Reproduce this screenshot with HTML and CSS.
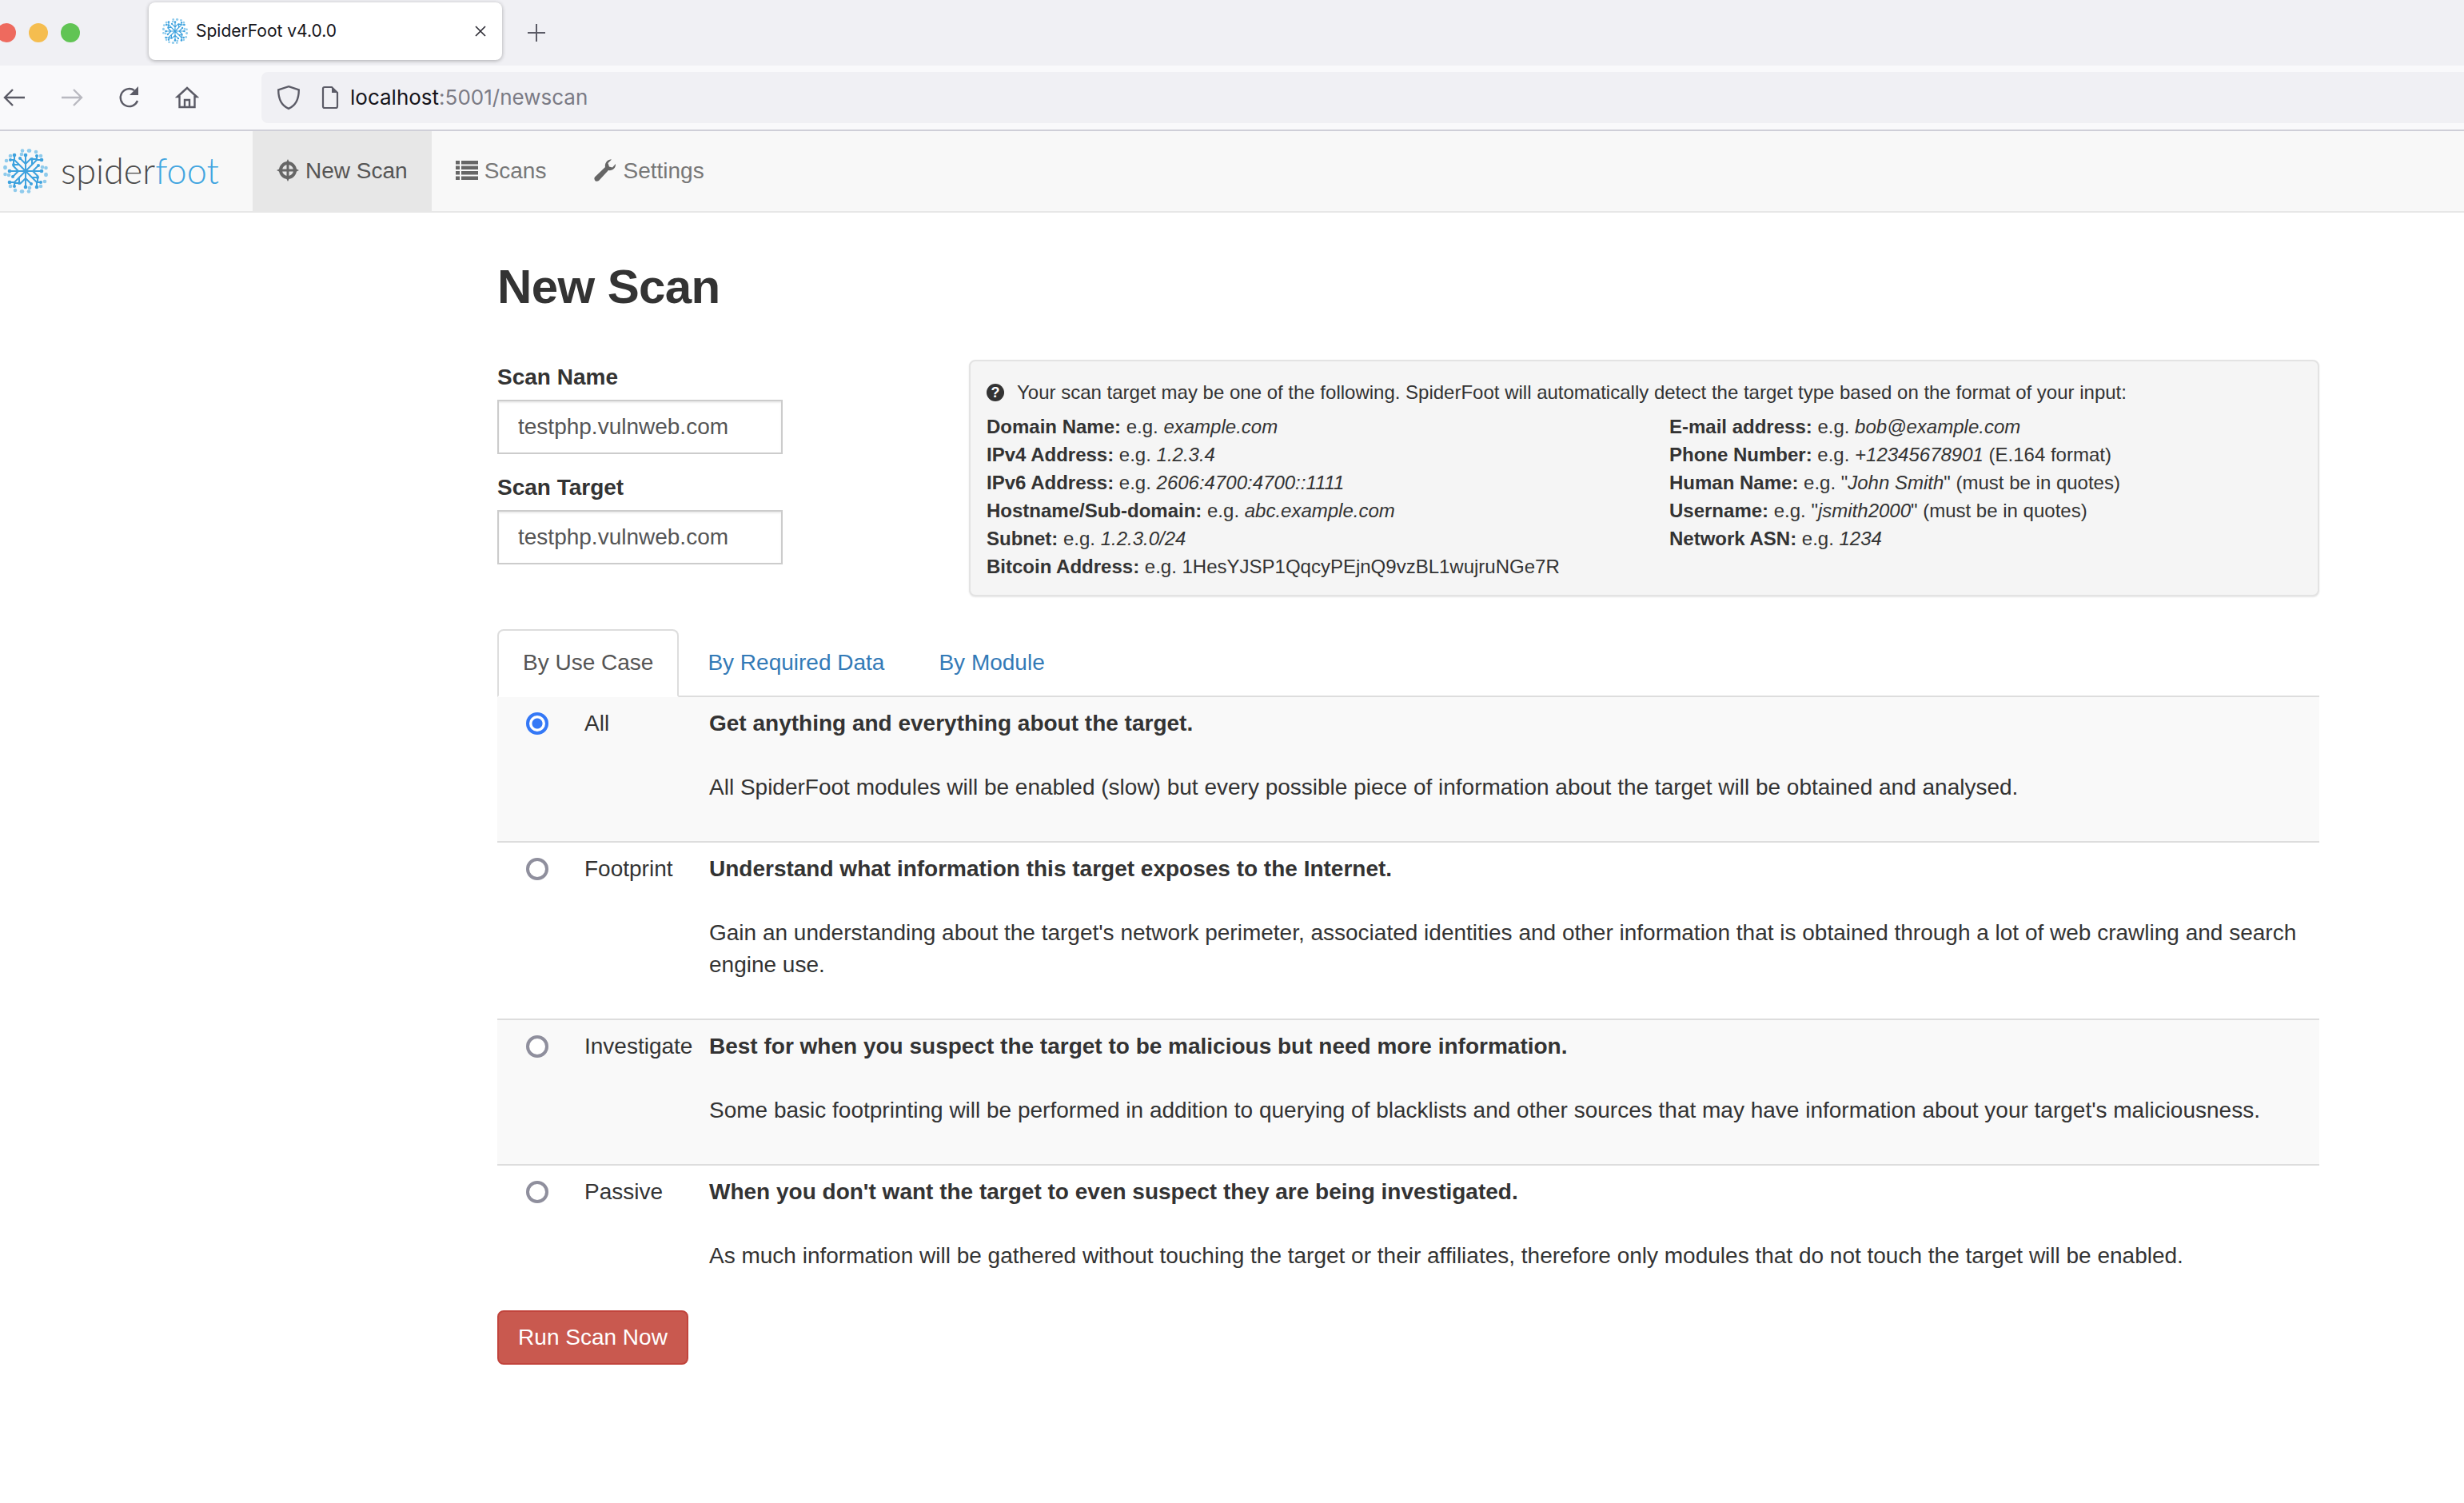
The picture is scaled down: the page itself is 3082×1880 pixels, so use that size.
FILE: index.html
```html
<!DOCTYPE html>
<html>
    <head>
        <meta charset="utf-8">
        <title>SpiderFoot v4.0.0</title>
        <link rel="stylesheet" href="styles.css">
    </head>
    <body>
        <svg class="defs" width="0" height="0">
            <defs>
                <g id="quarter">
                    <circle class="pale" cx="32" cy="2.5" r="2.3"/>
                    <circle class="pale" cx="24" cy="2.5" r="2.3"/>
                    <circle class="pale" cx="9" cy="9" r="2.3"/>
                    <circle class="pale" cx="4" cy="15" r="2.3"/>
                    <circle class="pale" cx="2.5" cy="23" r="2.3"/>
                    <circle class="pale" cx="7" cy="33" r="2.3"/>
                    <path class="arm" d="M28 28V8M28 28L14 14V8M28 19L21 12M14 14H9M28 28L20 20H13V15M28 19L35 12"/>
                    <circle class="dot" cx="28" cy="8" r="2.3"/>
                    <circle class="dot" cx="14" cy="8" r="2.3"/>
                    <circle class="dot" cx="21" cy="12" r="2"/>
                    <circle class="dot" cx="9" cy="14" r="2"/>
                    <circle class="dot" cx="13" cy="20" r="2"/>
                </g>
                <g id="logo-mark">
                    <use href="#quarter"/>
                    <use href="#quarter" transform="rotate(90 28 28)"/>
                    <use href="#quarter" transform="rotate(180 28 28)"/>
                    <use href="#quarter" transform="rotate(270 28 28)"/>
                </g>
            </defs>
        </svg>

        <div class="tabstrip">
            <span class="light red"></span>
            <span class="light yellow"></span>
            <span class="light green"></span>
            <div class="browsertab">
                <svg class="favicon" viewBox="0 0 56 56"><use href="#logo-mark"/></svg>
                <span class="browsertab-title">SpiderFoot v4.0.0</span>
                <svg class="closex" viewBox="0 0 16 16"><path d="M2 2L14 14M14 2L2 14"/></svg>
            </div>
            <svg class="newtab" viewBox="0 0 24 24"><path d="M12 1V23M1 12H23"/></svg>
        </div>

        <div class="toolbar">
            <svg class="tool back" viewBox="0 0 30 30"><path d="M28 15H3M13 5L3 15L13 25"/></svg>
            <svg class="tool forward" viewBox="0 0 30 30"><path d="M2 15H27M17 5L27 15L17 25"/></svg>
            <svg class="tool reload" viewBox="0 0 30 30"><path d="M25 19A11 11 0 1 1 21 6"/><path class="solid" d="M26 1V12H15Z"/></svg>
            <svg class="tool home" viewBox="0 0 30 30"><path d="M15 3L3 14L5.500 14V27H24.500V14L27 14ZM12 27V18H18V27"/></svg>
            <div class="urlbar">
                <svg class="shield" viewBox="0 0 30 30"><path d="M15 2L27 6C27 16 24 24 15 28C6 24 3 16 3 6Z"/></svg>
                <svg class="page" viewBox="0 0 24 30"><path d="M3 4A2 2 0 0 1 5 2H14L21 9V26A2 2 0 0 1 19 28H5A2 2 0 0 1 3 26Z"/><path class="solid" d="M14 2L21 9H14Z"/></svg>
                <span class="url">localhost<span class="url-rest">:5001/newscan</span></span>
            </div>
        </div>

        <nav class="navbar">
            <div class="brand">
                <svg class="brand-mark" viewBox="0 0 56 56"><use href="#logo-mark"/></svg>
                <span class="brand-name">spider<span class="brand-foot">foot</span></span>
            </div>
            <a class="navitem active">
                <svg class="navicon" viewBox="0 0 28 28"><circle cx="14" cy="14" r="9" fill="none" stroke-width="4"/><path d="M14 0L17 6H11ZM14 28L11 22H17ZM0 14L6 11V17ZM28 14L22 17V11Z"/><path d="M12.500 3H15.500V25H12.500ZM3 12.500H25V15.500H3Z"/></svg>
                New Scan
            </a>
            <a class="navitem">
                <svg class="navicon" viewBox="0 0 28 24"><path d="M0 0H5V4.500H0ZM7 0H28V4.500H7ZM0 6.500H5V11H0ZM7 6.500H28V11H7ZM0 13H5V17.500H0ZM7 13H28V17.500H7ZM0 19.500H5V24H0ZM7 19.500H28V24H7Z"/></svg>
                Scans
            </a>
            <a class="navitem">
                <svg class="navicon" viewBox="0 0 28 28"><path d="M27 6C27.500 11 23 15 18 14L6 27C4 28.500 1 28 0.500 25C0 23.500 1 22.500 2 21.500L14 10C13 5 17 0 22 0.500L17.500 5L19 9.500L23 10.500Z"/></svg>
                Settings
            </a>
        </nav>

        <div class="container">
            <h1 class="title">New Scan</h1>

            <div class="targetrow">
                <div class="targetform">
                    <label class="fieldlabel">Scan Name</label>
                    <input class="field" type="text" value="testphp.vulnweb.com">
                    <label class="fieldlabel second">Scan Target</label>
                    <input class="field" type="text" value="testphp.vulnweb.com">
                </div>
                <div class="well">
                    <div class="well-intro"><span class="qmark">?</span>Your scan target may be one of the following. SpiderFoot will automatically detect the target type based on the format of your input:</div>
                    <div class="well-grid">
                        <div>
                            <div><b>Domain Name:</b> e.g. <i>example.com</i></div>
                            <div><b>IPv4 Address:</b> e.g. <i>1.2.3.4</i></div>
                            <div><b>IPv6 Address:</b> e.g. <i>2606:4700:4700::1111</i></div>
                            <div><b>Hostname/Sub-domain:</b> e.g. <i>abc.example.com</i></div>
                            <div><b>Subnet:</b> e.g. <i>1.2.3.0/24</i></div>
                            <div><b>Bitcoin Address:</b> e.g. 1HesYJSP1QqcyPEjnQ9vzBL1wujruNGe7R</div>
                        </div>
                        <div>
                            <div><b>E-mail address:</b> e.g. <i>bob@example.com</i></div>
                            <div><b>Phone Number:</b> e.g. <i>+12345678901</i> (E.164 format)</div>
                            <div><b>Human Name:</b> e.g. "<i>John Smith</i>" (must be in quotes)</div>
                            <div><b>Username:</b> e.g. "<i>jsmith2000</i>" (must be in quotes)</div>
                            <div><b>Network ASN:</b> e.g. <i>1234</i></div>
                        </div>
                    </div>
                </div>
            </div>

            <ul class="tabs">
                <li class="tab active">By Use Case</li>
                <li class="tab">By Required Data</li>
                <li class="tab">By Module</li>
            </ul>

            <div class="usecases">
                <div class="usecase">
                    <input class="radio" type="radio" name="usecase" checked>
                    <div>All</div>
                    <div>
                        <p class="usecase-head">Get anything and everything about the target.</p>
                        <p>All SpiderFoot modules will be enabled (slow) but every possible piece of information about the target will be obtained and analysed.</p>
                    </div>
                </div>
                <div class="usecase">
                    <input class="radio" type="radio" name="usecase">
                    <div>Footprint</div>
                    <div>
                        <p class="usecase-head">Understand what information this target exposes to the Internet.</p>
                        <p>Gain an understanding about the target's network perimeter, associated identities and other information that is obtained through a lot of web crawling and search engine use.</p>
                    </div>
                </div>
                <div class="usecase">
                    <input class="radio" type="radio" name="usecase">
                    <div>Investigate</div>
                    <div>
                        <p class="usecase-head">Best for when you suspect the target to be malicious but need more information.</p>
                        <p>Some basic footprinting will be performed in addition to querying of blacklists and other sources that may have information about your target's maliciousness.</p>
                    </div>
                </div>
                <div class="usecase">
                    <input class="radio" type="radio" name="usecase">
                    <div>Passive</div>
                    <div>
                        <p class="usecase-head">When you don't want the target to even suspect they are being investigated.</p>
                        <p>As much information will be gathered without touching the target or their affiliates, therefore only modules that do not touch the target will be enabled.</p>
                    </div>
                </div>
            </div>

            <button class="runbtn">Run Scan Now</button>
        </div>
    </body>
</html>
```
FILE: styles.css
```css
body{
    margin: 0;
    color: #333333;
    background-color: white;
    font-family: "Liberation Sans", Arial, sans-serif;
    font-size: 28px;
    line-height: 40px;
}
.defs{
    display: block;
    height: 0;
}
.pale{
    fill: #8fcbec;
}
.dot{
    fill: #3ea2de;
}
.arm{
    fill: none;
    stroke: #3ea2de;
    stroke-width: 2;
}

/* browser chrome */
.tabstrip{
    display: flex;
    align-items: center;
    height: 82px;
    background-color: #f0f0f4;
    overflow: hidden;
}
.light{
    flex: none;
    width: 24px;
    height: 24px;
    margin-right: 16px;
    border-radius: 50%;
}
.light.red{
    margin-left: -4px;
    background-color: #ee6a5e;
}
.light.yellow{
    background-color: #f5bd4f;
}
.light.green{
    background-color: #61c454;
}
.browsertab{
    display: flex;
    align-items: center;
    box-sizing: border-box;
    width: 442px;
    height: 72px;
    margin-left: 70px;
    margin-bottom: 4px;
    padding: 0 19px 0 17px;
    background-color: white;
    border-radius: 8px;
    box-shadow: 0 1px 5px rgba(0,0,0,0.3);
}
.favicon{
    flex: none;
    width: 32px;
    height: 32px;
}
.browsertab-title{
    flex: 1;
    margin-left: 10px;
    font-family: "Inter", sans-serif;
    font-size: 21px;
    color: #15141a;
}
.closex{
    flex: none;
    width: 16px;
    height: 16px;
    fill: none;
    stroke: #2b2a33;
    stroke-width: 1.600;
}
.newtab{
    flex: none;
    width: 24px;
    height: 24px;
    margin-left: 31px;
    fill: none;
    stroke: #5b5b66;
    stroke-width: 2;
}
.toolbar{
    display: flex;
    align-items: center;
    box-sizing: border-box;
    height: 82px;
    background-color: #f9f9fb;
    border-bottom: 2px solid #cfcfd8;
}
.tool{
    flex: none;
    width: 30px;
    height: 30px;
    margin-right: 42px;
    fill: none;
    stroke: #5b5b66;
    stroke-width: 2.400;
}
.tool.back{
    margin-left: 3px;
}
.tool.forward{
    stroke: #b9b9c0;
}
.solid{
    fill: #5b5b66;
    stroke: none;
}
.urlbar{
    display: flex;
    align-items: center;
    flex: 1;
    height: 64px;
    margin-left: 36px;
    margin-right: -42px;
    margin-top: -1px;
    padding-left: 18px;
    background-color: #f0f0f4;
    border-radius: 8px;
}
.shield{
    flex: none;
    width: 32px;
    height: 32px;
    fill: none;
    stroke: #5b5b66;
    stroke-width: 2.200;
}
.page{
    flex: none;
    width: 26px;
    height: 30px;
    margin-left: 23px;
    fill: none;
    stroke: #5b5b66;
    stroke-width: 2.200;
}
.url{
    margin-left: 12px;
    font-family: "Inter", sans-serif;
    font-size: 26px;
    color: #15141a;
}
.url-rest{
    color: #7b7b85;
}

/* spiderfoot navbar */
.navbar{
    display: flex;
    height: 100px;
    background-color: #f8f8f8;
    border-bottom: 2px solid #e7e7e7;
}
.brand{
    display: flex;
    align-items: center;
    width: 316px;
    box-sizing: border-box;
    padding-left: 4px;
}
.brand-mark{
    flex: none;
    width: 56px;
    height: 56px;
}
.brand-name{
    margin-left: 16px;
    margin-top: -2px;
    font-family: "Lato", sans-serif;
    font-weight: 300;
    font-size: 45px;
    color: #4a4a4a;
}
.brand-foot{
    color: #41a5e0;
}
.navitem{
    display: flex;
    align-items: center;
    padding: 0 30px;
    color: #777777;
}
.navitem.active{
    background-color: #e7e7e7;
    color: #555555;
}
.navicon{
    flex: none;
    width: 28px;
    height: 28px;
    margin-right: 8px;
    margin-top: -2px;
    fill: #666666;
    stroke: #666666;
    stroke-width: 0;
}

/* page */
.container{
    width: 2279px;
    margin-left: 622px;
}
.title{
    margin: 60px 0 58px 0;
    font-size: 60px;
    line-height: 66px;
    font-weight: 700;
    letter-spacing: -0.600px;
}
.targetrow{
    display: flex;
    align-items: flex-start;
}
.targetform{
    flex: none;
    width: 590px;
    padding-top: 2px;
}
.fieldlabel{
    display: block;
    margin-bottom: 8px;
    font-weight: 700;
}
.fieldlabel.second{
    margin-top: 22px;
}
.field{
    display: block;
    box-sizing: border-box;
    width: 357px;
    height: 68px;
    padding: 0 24px;
    border: 2px solid #cccccc;
    color: #555555;
    font-family: inherit;
    font-size: 28px;
    box-shadow: inset 0 2px 2px rgba(0,0,0,0.075);
    outline: none;
}
.well{
    flex: 1;
    box-sizing: border-box;
    height: 296px;
    padding: 21px 20px 0 20px;
    background-color: #f5f5f5;
    border: 2px solid #e3e3e3;
    border-radius: 8px;
    box-shadow: 0 1px 2px rgba(0,0,0,0.1);
    font-size: 24px;
    line-height: 35px;
}
.well-intro{
    display: flex;
    align-items: center;
    margin-bottom: 8px;
}
.qmark{
    flex: none;
    width: 22px;
    height: 22px;
    margin-right: 16px;
    border-radius: 50%;
    background-color: #333333;
    color: white;
    font-size: 18px;
    font-weight: 700;
    line-height: 22px;
    text-align: center;
}
.well-grid{
    display: grid;
    grid-template-columns: 854px 1fr;
}
.tabs{
    display: flex;
    margin: 41px 0 0 0;
    padding: 0;
    list-style: none;
    border-bottom: 2px solid #dddddd;
}
.tab{
    padding: 20px 30px 21px 30px;
    margin-right: 4px;
    margin-bottom: -2px;
    border: 2px solid transparent;
    color: #337ab7;
}
.tab.active{
    background-color: white;
    color: #555555;
    border-color: #dddddd;
    border-bottom-color: white;
    border-radius: 8px 8px 0 0;
}
.usecase{
    display: grid;
    grid-template-columns: 73px 156px 1fr;
    padding: 13px 16px 47px 36px;
    border-bottom: 2px solid #dddddd;
}
.usecase:nth-child(odd){
    background-color: #f9f9f9;
}
.usecase:last-child{
    border-bottom: none;
}
.usecase p{
    margin: 0;
}
.usecase .usecase-head{
    margin-bottom: 40px;
    font-weight: 700;
}
.radio{
    appearance: none;
    box-sizing: border-box;
    width: 28px;
    height: 28px;
    margin: 6px 0 0 0;
    border: 4px solid #8f8f9d;
    border-radius: 50%;
    background-color: white;
}
.radio:checked{
    border-color: #3478f6;
    background: radial-gradient(circle, #3478f6 0, #3478f6 6px, white 7px);
}
.runbtn{
    display: block;
    box-sizing: border-box;
    width: 239px;
    height: 68px;
    margin-top: 1px;
    padding: 0;
    background-color: #c9594f;
    border: 2px solid #c1443c;
    border-radius: 8px;
    color: white;
    font-family: inherit;
    font-size: 28px;
}
```
